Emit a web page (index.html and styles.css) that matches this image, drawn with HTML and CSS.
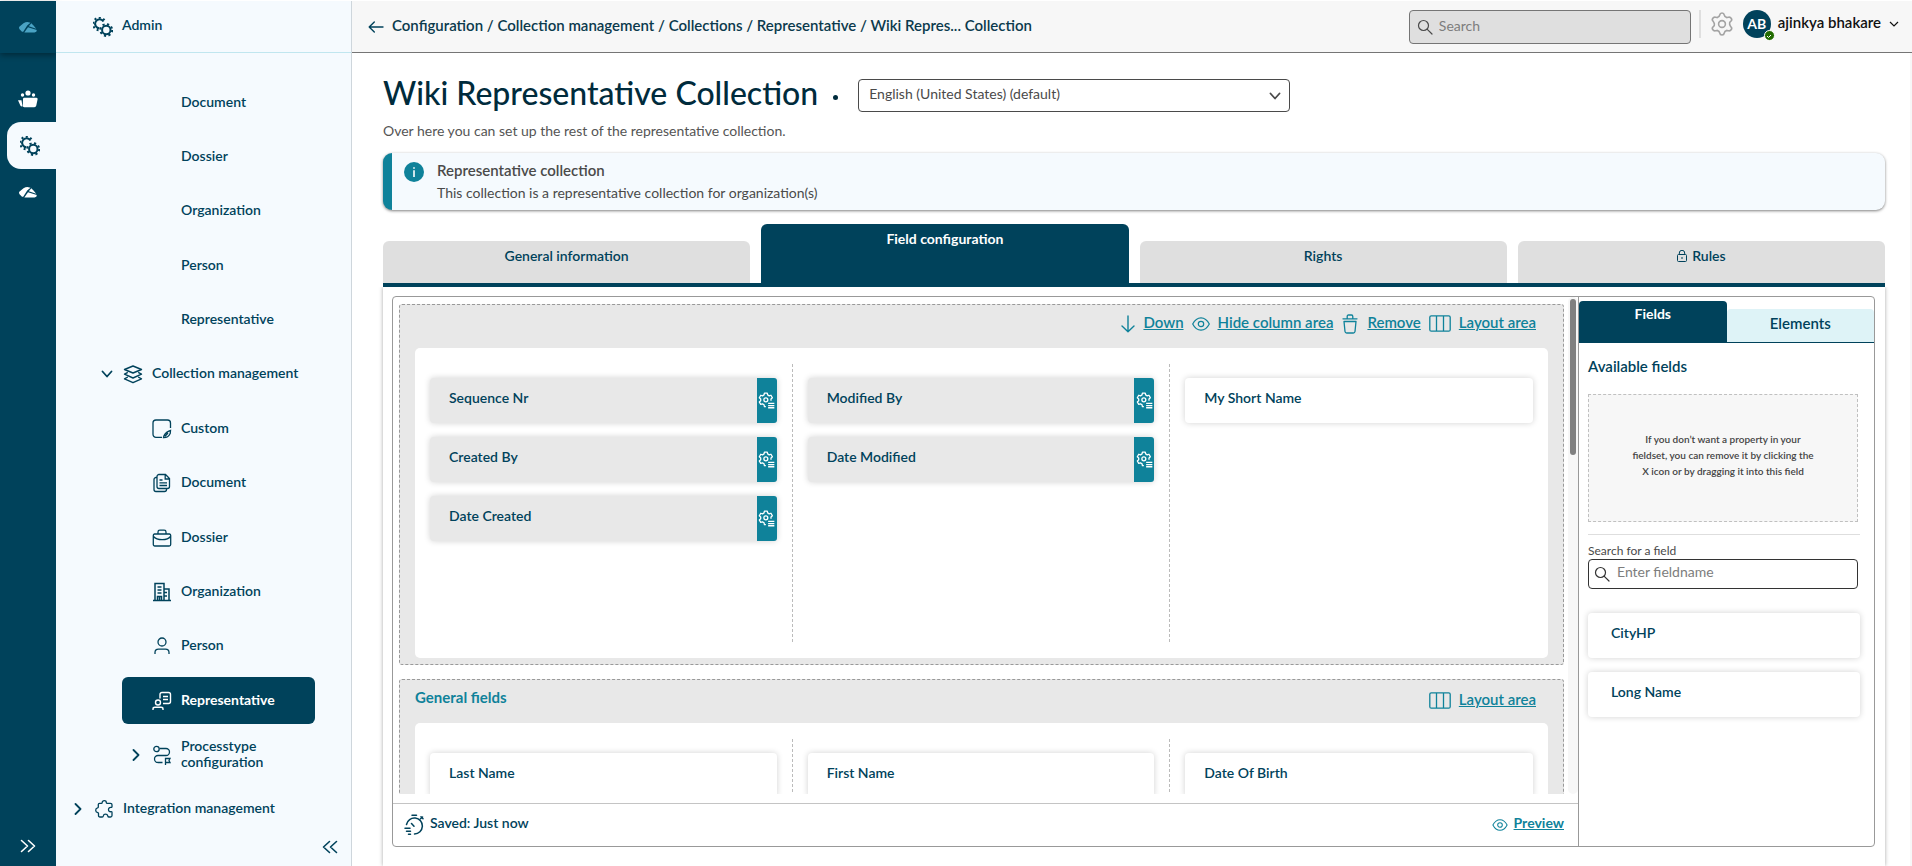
FILE: index.html
```html
<!DOCTYPE html>
<html lang="en">
<head>
<meta charset="utf-8">
<title>Wiki Representative Collection</title>
<link rel="stylesheet" href="styles.css">
</head>
<body>
<svg class="sprite" aria-hidden="true">
  <symbol id="i-logo" viewBox="0 0 18 11"><path fill="currentColor" d="M4.500 1.200Q6.500 0 8.500 0L11.500.8 8.200 3.500 4.200 9.800H3L.3 7 0 5z"/><path fill="currentColor" d="M12.300 1.200 14.500 3.500 17.200 6.800 9.800 4.200z"/><path fill="currentColor" d="M9 5.200 17.800 8l-.5 1.800L15.500 10.600H5.300z"/></symbol>
  <symbol id="i-team" viewBox="0 0 20 18"><circle cx="10" cy="3" r="2.600" fill="currentColor"/><circle cx="4.500" cy="5" r="1.700" fill="currentColor"/><circle cx="15.500" cy="5" r="1.700" fill="currentColor"/><path fill="currentColor" d="M0 10.200h3.500L4.500 16.500Q2.500 17 2 14.800zM6.200 7.800H18.500Q19.900 7.800 19.600 9.300L18.300 15.500Q17.900 17.200 16.300 17.200H6.300Q4.600 17.200 4.800 15.400L5 9.200Q5 7.800 6.200 7.800z"/></symbol>
  <symbol id="i-gears" viewBox="0 0 20 20"><g fill="none" stroke="currentColor"><path stroke-width="2" d="M10.500 4.500A4.500 4.500 0 1 0 6.500 11.300"/><path stroke-width="2" stroke-dasharray="2 2.500" d="M11.500 3.200A6.300 6.300 0 1 0 5.600 13.200"/><circle cx="13.300" cy="13" r="4.200" stroke-width="2"/><circle cx="13.300" cy="13" r="5.900" stroke-width="2" stroke-dasharray="2.200 2.434"/></g></symbol>
  <symbol id="i-layers" viewBox="0 0 20 19"><path fill="none" stroke="currentColor" stroke-width="1.400" stroke-linejoin="round" d="M10 1 18.500 4.500 10 8 1.500 4.500zM4.800 7.300 1.500 9.200 10 13l8.500-3.800-3.300-1.900M4.800 12 1.500 13.900 10 17.700l8.500-3.800L15.200 12"/></symbol>
  <symbol id="i-custom" viewBox="0 0 20 20"><path fill="none" stroke="currentColor" stroke-width="1.300" d="M10 18.300H4A3 3 0 0 1 1 15.300V4A3 3 0 0 1 4 1H15.500A3 3 0 0 1 18.500 4V9"/><path fill="none" stroke="currentColor" stroke-width="1.300" d="M11.500 18.700C12 15 14 13.500 16.800 12.200L18.500 11.500 18.200 14.500C17 17 14.500 18.800 11.500 18.700zM13 17.300 16 14"/></symbol>
  <symbol id="i-doc" viewBox="0 0 20 20"><g fill="none" stroke="currentColor" stroke-width="1.300"><path d="M7 1.500H13.500L17.500 5.500V13.500A2 2 0 0 1 15.500 15.500H7A2 2 0 0 1 5 13.500V3.500A2 2 0 0 1 7 1.500zM13.200 1.800V6H17.500M7.500 7H10.500M7.500 9.800H15M7.500 12.500H15"/><path d="M5 4.500H4A2 2 0 0 0 2 6.500V16.500A2 2 0 0 0 4 18.500H12.500A2 2 0 0 0 14.500 16.500V15.500"/></g></symbol>
  <symbol id="i-case" viewBox="0 0 20 18"><g fill="none" stroke="currentColor" stroke-width="1.300"><path d="M2.500 5H17.500A1.500 1.500 0 0 1 18.700 6.500V15.500A1.500 1.500 0 0 1 17.200 17H2.800A1.500 1.500 0 0 1 1.300 15.500V6.500A1.500 1.500 0 0 1 2.500 5zM1.500 7.500C5 11.500 15 12 18.500 7.500M6 5V3A1.800 1.800 0 0 1 7.800 1.200H12.200A1.800 1.800 0 0 1 14 3V5"/></g></symbol>
  <symbol id="i-building" viewBox="0 0 20 20"><g fill="none" stroke="currentColor" stroke-width="1.500"><path d="M1 18.500H19M3 18.500V1.500H12V18.500M12 7H17V18.500M5.500 5H9.500M5.500 8H9.500M5.500 11H9.500M5.500 18V14.500H9.500V18M7.500 14.500V18M12 10.500H15M12 14H15"/></g></symbol>
  <symbol id="i-person" viewBox="0 0 16 18"><g fill="none" stroke="currentColor" stroke-width="1.300"><circle cx="8" cy="5" r="4"/><path d="M1 17V15.500Q1 12.200 4.500 12.200H11.500Q15 12.200 15 15.500V17"/></g></symbol>
  <symbol id="i-rep" viewBox="0 0 20 20"><g fill="none" stroke="currentColor" stroke-width="1.400"><circle cx="6" cy="11.500" r="2.500"/><path d="M1 19V18Q1 16.300 3 16.300H9Q11 16.300 11 18V19M8 7.500V3.500A2 2 0 0 1 10 1.500H16.500A2 2 0 0 1 18.500 3.500V10.500A2 2 0 0 1 16.500 12.500H11M11 5.500H16M11 8.500H16"/></g></symbol>
  <symbol id="i-route" viewBox="0 0 18 20"><g fill="none" stroke="currentColor" stroke-width="1.300"><circle cx="3.500" cy="4" r="2.700"/><path d="M6.500 3.500H13A3.500 3.500 0 0 1 13 10.500H5A3.500 3.500 0 0 0 5 17.500H9.500M12.500 20V13.500H17L16 15.500 17 17.500H12.500"/></g></symbol>
  <symbol id="i-puzzle" viewBox="0 0 18 18"><path fill="none" stroke="currentColor" stroke-width="1.300" stroke-linejoin="round" d="M4.500 3.300H6.500Q7.300 3.200 7.200 2.500C7.200 1.300 8 .7 9.200.7S11.300 1.300 11.300 2.500Q11.300 3.200 12 3.300H15.500Q17 3.300 17 4.800V6.500Q17 7.500 16 7.400C14.300 7.200 13.500 8.400 13.500 9.600S14.300 11.900 16 11.700Q17 11.600 17 12.500V15.500Q17 17 15.500 17H14Q13 17 12.800 16C12.500 14.700 11.700 14.200 10.500 14.200S8.500 14.700 8.300 16Q8.200 17 7.200 17H5Q3.500 17 3.500 15.500V13.500Q3.500 12.800 2.800 12.600C1.500 12.300.7 11.500.7 10.200S1.400 8 2.600 7.800Q3.300 7.700 3.300 7V4.500Q3.300 3.300 4.500 3.300z"/></symbol>
  <symbol id="i-down" viewBox="0 0 12 12"><path fill="none" stroke="currentColor" stroke-width="1.800" stroke-linecap="round" stroke-linejoin="round" d="M1.500 3.500 6 8.500 10.500 3.500"/></symbol>
  <symbol id="i-right" viewBox="0 0 12 12"><path fill="none" stroke="currentColor" stroke-width="1.800" stroke-linecap="round" stroke-linejoin="round" d="M3.500 1 8.500 6 3.500 11"/></symbol>
  <symbol id="i-dright" viewBox="0 0 16 14"><path fill="none" stroke="currentColor" stroke-width="1.600" stroke-linecap="round" stroke-linejoin="round" d="M1.500 1.500 7.500 7 1.500 12.500M8.500 1.500 14.500 7 8.500 12.500"/></symbol>
  <symbol id="i-dleft" viewBox="0 0 16 14"><path fill="none" stroke="currentColor" stroke-width="1.600" stroke-linecap="round" stroke-linejoin="round" d="M7.500 1.500 1.500 7 7.500 12.500M14.500 1.500 8.500 7 14.500 12.500"/></symbol>
  <symbol id="i-back" viewBox="0 0 16 12"><path fill="none" stroke="currentColor" stroke-width="1.400" stroke-linecap="round" stroke-linejoin="round" d="M15 6H1.200M6.300 1 1.200 6 6.300 11"/></symbol>
  <symbol id="i-search" viewBox="0 0 16 16"><g fill="none" stroke="currentColor" stroke-width="1.200" stroke-linecap="round"><circle cx="6.500" cy="6.500" r="5"/><path d="M10.300 10.300 15 15"/></g></symbol>
  <symbol id="i-cog" viewBox="0 0 24 24"><g fill="none" stroke="currentColor" stroke-width="1.600" stroke-linejoin="round"><path d="M9.800 2.800Q10 1 12 1T14.200 2.800Q14.500 5 17 5.600L18.500 5.200Q20.300 4.800 21.300 6.500T20.900 9.200Q19.200 10.300 19.600 12T20.900 14.800Q22.300 15.800 21.300 17.500T18.500 18.800L17 18.400Q14.500 19 14.200 21.200Q14 23 12 23T9.800 21.200Q9.500 19 7 18.400L5.500 18.800Q3.700 19.200 2.700 17.500T3.100 14.800Q4.800 13.700 4.400 12T3.100 9.200Q1.700 8.200 2.700 6.500T5.500 5.200L7 5.600Q9.500 5 9.800 2.800z"/><circle cx="12" cy="12" r="3.400"/></g></symbol>
  <symbol id="i-coglist" viewBox="0 0 26 26"><g fill="none" stroke="currentColor" stroke-width="2" stroke-linejoin="round"><path d="M19.880 13.390V10.610L21.990 8.760 19.800 4.970 17.140 5.870 14.740 4.480 14.180 1.730H9.820L9.260 4.480 6.860 5.870 4.200 4.970 2.010 8.760 4.120 10.610V13.390L2.010 15.240 4.200 19.030 6.860 18.130 9.260 19.520 9.820 22.270H12"/><circle cx="12" cy="12" r="3"/><path d="M15.500 17.500H25M15.500 20.800H25M15.500 24.100H25"/></g></symbol>
  <symbol id="i-info" viewBox="0 0 20 20"><circle cx="10" cy="10" r="10" fill="currentColor"/><path fill="#fff" d="M9.200 5.200H10.800V6.800H9.200zM9.200 8.300H10.800V15H9.200z"/></symbol>
  <symbol id="i-lock" viewBox="0 0 10 12"><g fill="none" stroke="currentColor" stroke-width="1"><rect x=".5" y="4.500" width="9" height="7" rx="1"/><path d="M2.300 4.500V3A2.700 2.700 0 0 1 7.700 3V4.500M5 7V9"/></g></symbol>
  <symbol id="i-arrow" viewBox="0 0 14 18"><path fill="none" stroke="currentColor" stroke-width="1.400" stroke-linecap="round" stroke-linejoin="round" d="M7 1V16.500M1 11 7 16.700 13 11"/></symbol>
  <symbol id="i-eye" viewBox="0 0 18 14"><g fill="none" stroke="currentColor" stroke-width="1.200"><path d="M.7 7C2.500 3.500 5.500.8 9 .8S15.500 3.500 17.300 7C15.500 10.500 12.500 13.200 9 13.200S2.500 10.500.7 7z"/><circle cx="9" cy="7" r="2.700"/></g></symbol>
  <symbol id="i-trash" viewBox="0 0 16 20"><path fill="none" stroke="currentColor" stroke-width="1.300" stroke-linejoin="round" stroke-linecap="round" d="M1 4.800H15M5.200 4.500V2.500Q5.200 1 6.500 1H9.500Q10.800 1 10.800 2.500V4.500M2 7.500 3 17.500Q3.200 19 4.700 19H11.300Q12.800 19 13 17.500L14 7.500z"/></symbol>
  <symbol id="i-cols" viewBox="0 0 22 17"><g fill="none" stroke="currentColor" stroke-width="1.300"><rect x=".8" y=".8" width="20.400" height="15.400" rx="1.500"/><path d="M7.500 1V16M14.500 1V16"/></g></symbol>
  <symbol id="i-timer" viewBox="0 0 20 22"><path fill="none" stroke="currentColor" stroke-width="1.500" stroke-linecap="round" d="M2.500 10.500A8 8 0 1 1 10.500 20M8 1.200H12.500M16.500 4.800 18.500 3M17 2.800 19 4.800M7.500 9.500 10 12.300M1 14.300H6M2.500 17.300H6.500M4.500 20.300H6.500"/></symbol>
</svg>

<div class="app">
  <aside class="rail">
    <a class="rail-logo" href="#" aria-label="Home"><svg width="18" height="11"><use href="#i-logo"/></svg></a>
    <nav class="rail-nav" aria-label="Modules">
      <a href="#" aria-label="Workspace"><svg width="20" height="18"><use href="#i-team"/></svg></a>
      <a href="#" class="current" aria-label="Admin"><svg width="20" height="20"><use href="#i-gears"/></svg></a>
      <a href="#" aria-label="Platform"><svg width="18" height="11"><use href="#i-logo"/></svg></a>
    </nav>
    <button class="rail-toggle" aria-label="Expand"><svg width="16" height="14"><use href="#i-dright"/></svg></button>
  </aside>

  <aside class="side">
    <div class="side-head"><svg width="20" height="20"><use href="#i-gears"/></svg><span>Admin</span></div>
    <nav class="tree" aria-label="Admin">
      <a href="#" class="node l3"><span>Document</span></a>
      <a href="#" class="node l3"><span>Dossier</span></a>
      <a href="#" class="node l3"><span>Organization</span></a>
      <a href="#" class="node l3"><span>Person</span></a>
      <a href="#" class="node l3"><span>Representative</span></a>
      <a href="#" class="node l2"><svg class="chev" width="12" height="12"><use href="#i-down"/></svg><svg class="ico" width="20" height="19"><use href="#i-layers"/></svg><span>Collection management</span></a>
      <a href="#" class="node l3"><svg class="ico" width="20" height="20"><use href="#i-custom"/></svg><span>Custom</span></a>
      <a href="#" class="node l3"><svg class="ico" width="20" height="20"><use href="#i-doc"/></svg><span>Document</span></a>
      <a href="#" class="node l3"><svg class="ico" width="20" height="18"><use href="#i-case"/></svg><span>Dossier</span></a>
      <a href="#" class="node l3"><svg class="ico" width="20" height="20"><use href="#i-building"/></svg><span>Organization</span></a>
      <a href="#" class="node l3"><svg class="ico" width="20" height="18"><use href="#i-person"/></svg><span>Person</span></a>
      <a href="#" class="node l3 selected" aria-current="page"><svg class="ico" width="20" height="20"><use href="#i-rep"/></svg><span>Representative</span></a>
      <a href="#" class="node l3"><svg class="chev" width="12" height="12"><use href="#i-right"/></svg><svg class="ico" width="20" height="20"><use href="#i-route"/></svg><span>Processtype configuration</span></a>
      <a href="#" class="node l1"><svg class="chev" width="12" height="12"><use href="#i-right"/></svg><svg class="ico" width="20" height="18"><use href="#i-puzzle"/></svg><span>Integration management</span></a>
    </nav>
    <button class="side-toggle" aria-label="Collapse"><svg width="16" height="14"><use href="#i-dleft"/></svg></button>
  </aside>

  <div class="main">
    <header class="top">
      <button class="back" aria-label="Back"><svg width="16" height="12"><use href="#i-back"/></svg></button>
      <nav class="crumbs" aria-label="Breadcrumb">Configuration / Collection management / Collections / Representative / Wiki Repres... Collection</nav>
      <label class="search"><svg width="16" height="16"><use href="#i-search"/></svg><input type="search" placeholder="Search" aria-label="Search"></label>
      <div class="account">
        <button class="cog" aria-label="Settings"><svg width="24" height="24"><use href="#i-cog"/></svg></button>
        <button class="user"><span class="avatar">AB<span class="badge"><svg viewBox="0 0 8 8" width="8" height="8"><path d="M2 4 3.500 5.500 6 3" fill="none" stroke="#fff"/></svg></span></span><span class="user-name">ajinkya bhakare</span><svg width="12" height="12" viewBox="0 0 12 12"><path d="M2 4 6 8 10 4" fill="none" stroke="currentColor" stroke-width="1.200"/></svg></button>
      </div>
    </header>

    <main class="page">
      <div class="title-row">
        <h1>Wiki Representative Collection</h1>
        <i class="dot"></i>
        <div class="select">
          <select aria-label="Language"><option>English (United States) (default)</option></select>
          <svg width="12" height="12"><use href="#i-down"/></svg>
        </div>
      </div>
      <p class="intro">Over here you can set up the rest of the representative collection.</p>
      <section class="notice">
        <svg width="20" height="20"><use href="#i-info"/></svg>
        <div><h2>Representative collection</h2><p>This collection is a representative collection for organization(s)</p></div>
      </section>
      <div class="tabs" role="tablist">
        <button role="tab">General information</button>
        <button role="tab" class="active" aria-selected="true">Field configuration</button>
        <button role="tab">Rights</button>
        <button role="tab"><svg width="10" height="12"><use href="#i-lock"/></svg>Rules</button>
      </div>
      <div class="panel">
        <div class="editor">
          <section class="canvas">
            <div class="viewport">
              <div class="areas">
                <section class="area">
                  <header class="area-head">
                    <div class="actions">
                      <a href="#"><svg width="14" height="18"><use href="#i-arrow"/></svg><span>Down</span></a>
                      <a href="#"><svg width="18" height="14"><use href="#i-eye"/></svg><span>Hide column area</span></a>
                      <a href="#"><svg width="18" height="20"><use href="#i-trash"/></svg><span>Remove</span></a>
                      <a href="#"><svg width="22" height="17"><use href="#i-cols"/></svg><span>Layout area</span></a>
                    </div>
                  </header>
                  <div class="columns">
                    <div class="col">
                      <div class="field locked"><span>Sequence Nr</span><button aria-label="Sequence Nr settings"><svg width="17" height="17"><use href="#i-coglist"/></svg></button></div>
                      <div class="field locked"><span>Created By</span><button aria-label="Created By settings"><svg width="17" height="17"><use href="#i-coglist"/></svg></button></div>
                      <div class="field locked"><span>Date Created</span><button aria-label="Date Created settings"><svg width="17" height="17"><use href="#i-coglist"/></svg></button></div>
                    </div>
                    <div class="col">
                      <div class="field locked"><span>Modified By</span><button aria-label="Modified By settings"><svg width="17" height="17"><use href="#i-coglist"/></svg></button></div>
                      <div class="field locked"><span>Date Modified</span><button aria-label="Date Modified settings"><svg width="17" height="17"><use href="#i-coglist"/></svg></button></div>
                    </div>
                    <div class="col">
                      <div class="field"><span>My Short Name</span></div>
                    </div>
                  </div>
                </section>
                <section class="area">
                  <header class="area-head titled">
                    <h3>General fields</h3>
                    <div class="actions"><a href="#"><svg width="22" height="17"><use href="#i-cols"/></svg><span>Layout area</span></a></div>
                  </header>
                  <div class="columns">
                    <div class="col"><div class="field"><span>Last Name</span></div></div>
                    <div class="col"><div class="field"><span>First Name</span></div></div>
                    <div class="col"><div class="field"><span>Date Of Birth</span></div></div>
                  </div>
                </section>
              </div>
              <div class="track" aria-hidden="true"><div class="thumb"></div></div>
            </div>
            <footer class="canvas-foot">
              <span class="saved"><svg width="20" height="22"><use href="#i-timer"/></svg><span>Saved: Just now</span></span>
              <a href="#" class="preview"><svg width="16" height="12"><use href="#i-eye"/></svg><span>Preview</span></a>
            </footer>
          </section>
          <aside class="library">
            <div class="lib-tabs" role="tablist">
              <button role="tab" class="active" aria-selected="true">Fields</button>
              <button role="tab">Elements</button>
            </div>
            <div class="lib-body">
              <h3>Available fields</h3>
              <div class="drop"><p>If you don’t want a property in your fieldset, you can remove it by clicking the X icon or by dragging it into this field</p></div>
              <hr>
              <label for="fieldname">Search for a field</label>
              <div class="find"><svg width="16" height="16"><use href="#i-search"/></svg><input id="fieldname" type="text" placeholder="Enter fieldname"></div>
              <div class="lib-list">
                <div class="field"><span>CityHP</span></div>
                <div class="field"><span>Long Name</span></div>
              </div>
            </div>
          </aside>
        </div>
      </div>
    </main>
  </div>
</div>
</body>
</html>
```
FILE: styles.css
```css
:root {
  --navy: #00425b;
  --teal: #0f829a;
  --ice: #f5fafe;
  --grey: #e8e8e8;
  --line: #999;
  --text: #4a4a4a;
}
* { box-sizing: border-box; margin: 0; }
body {
  font: 600 14px/16px Lato, "Liberation Sans", sans-serif;
  color: var(--navy);
  background: #fff;
}
a { color: inherit; text-decoration: none; }
button, input, select { font: inherit; color: inherit; background: none; border: 0; padding: 0; }
svg { flex: none; display: block; }
.sprite { position: absolute; width: 0; height: 0; }

.app { display: flex; height: 100vh; padding-top: 1px; overflow: hidden; }

/* Icon rail */
.rail { width: 56px; flex: none; display: flex; flex-direction: column; background: var(--navy); color: #fff; }
.rail-logo { height: 52px; display: grid; place-items: center; color: #4aa3c4; box-shadow: 0 2px 6px rgba(0, 0, 0, .4); }
.rail-nav { flex: 1; padding-top: 22px; }
.rail-nav a { height: 47px; margin-left: 7px; padding-right: 7px; display: grid; place-items: center; }
.rail-nav .current { background: var(--ice); color: var(--navy); border-radius: 14px 0 0 14px; padding-right: 3px; }
.rail-toggle { height: 40px; display: grid; place-items: center; }

/* Navigation tree */
.side { width: 296px; flex: none; display: flex; flex-direction: column; background: var(--ice); border-right: 1px solid #ced6dc; }
.side-head { height: 52px; flex: none; display: flex; align-items: center; gap: 9px; padding-left: 37px; border-bottom: 1px solid #c0e6ef; }
.side-head span { padding-bottom: 4px; }
.tree { flex: 1; display: flex; flex-direction: column; justify-content: space-between; padding-top: 26px; }
.node { height: 47px; display: flex; align-items: center; margin-right: 36px; border-radius: 6px; }
.node span { padding-bottom: 2px; }
.node .ico { margin-right: 9px; }
.node .chev { margin-right: 10px; }
.l1 { margin-left: 16px; }
.l2 { margin-left: 45px; }
.l3 { margin-left: 66px; padding-left: 59px; }
.l3:has(.ico) { padding-left: 30px; }
.l3:has(.chev) { padding-left: 8px; }
.l3 span { max-width: 110px; }
.selected { background: var(--navy); color: #fff; font-weight: 700; }
.side-toggle { align-self: flex-end; height: 38px; margin: -5px 13px 0 0; }

/* Top bar */
.main { flex: 1; min-width: 0; display: flex; flex-direction: column; }
.top { height: 52px; flex: none; display: flex; align-items: center; padding: 0 12px 0 16px; background: #f7f7f7; border-bottom: 1px solid #757575; }
.back { margin-right: 8px; }
.crumbs { flex: 1; color: #0b3a4d; font-size: 15px; padding-bottom: 4px; }
.search { width: 282px; height: 34px; display: flex; align-items: center; gap: 6px; padding-left: 7px; background: #dfdfdf; border: 1px solid #757575; border-radius: 4px; color: #4a4a4a; }
.search input { flex: 1; min-width: 0; padding-bottom: 2px; outline: 0; font-weight: 400; }
::placeholder { color: #7d7d7d; opacity: 1; }
.account { display: flex; align-items: center; gap: 9px; height: 28px; margin: -5px 0 0 8px; padding-left: 9px; border-left: 2px solid #dfdfdf; }
.cog { color: #a3a3a3; }
.user { display: flex; align-items: center; gap: 7px; color: #111; }
.user-name { font-size: 15px; padding-bottom: 4px; }
.avatar { position: relative; width: 28px; height: 28px; border-radius: 50%; display: grid; place-items: center; background: var(--navy); color: #fff; font-weight: 700; }
.badge { position: absolute; right: -4px; bottom: -3px; width: 11px; height: 11px; display: grid; place-items: center; background: #216b00; border: 1px solid #fff; border-radius: 50%; }

/* Page */
.page { flex: 1; min-height: 0; display: flex; flex-direction: column; padding: 23px 25px 0 31px; border-right: 2px solid #f7f7f7; }
.title-row { display: flex; align-items: center; height: 38px; }
h1 { padding-bottom: 4px; font-size: 32px; line-height: 38px; font-weight: 500; color: #002b3c; }
.dot { width: 5px; height: 5px; margin: 4px 20px 0 15px; border-radius: 50%; background: #002b3c; }
.select { position: relative; width: 432px; height: 33px; color: var(--text); }
.select select { appearance: none; width: 100%; height: 100%; padding: 0 30px 2px 10px; border: 1px solid var(--text); border-radius: 4px; font-weight: 400; }
.select svg { position: absolute; right: 9px; top: 11px; }
.intro { margin-top: 8px; line-height: 18px; font-weight: 400; color: #555; }
.notice { display: flex; gap: 13px; height: 57px; margin-top: 13px; padding: 9px 12px; border-left: 9px solid var(--teal); border-radius: 9px; background: var(--ice); color: var(--teal); box-shadow: 0 1px 3px rgba(0, 0, 0, .5); }
.notice h2 { font-size: 15px; line-height: 16px; font-weight: 600; color: var(--text); }
.notice p { margin-top: 6px; line-height: 18px; font-weight: 400; color: var(--text); }

.tabs { display: grid; grid-template-columns: repeat(4, 1fr); column-gap: 11px; align-items: end; margin-top: 14px; border-bottom: 4px solid var(--navy); }
.tabs button { height: 42px; padding-bottom: 12px; display: flex; align-items: center; justify-content: center; gap: 5px; background: #dfdfdf; border-radius: 6px 6px 0 0; }
.tabs .active { height: 59px; padding-bottom: 30px; background: var(--navy); color: #fff; font-weight: 700; }

.panel { flex: 1; min-height: 0; padding: 9px 10px 19px 9px; box-shadow: 0 0 4px rgba(0, 0, 0, .35); clip-path: inset(0 -6px 0 -6px); }
.editor { display: flex; height: 100%; border: 1px solid var(--line); border-radius: 4px; }
.canvas { flex: 1; min-width: 0; display: flex; flex-direction: column; }
.viewport { flex: 1; min-height: 0; display: flex; margin-bottom: 9px; }
.areas { flex: 1; overflow: hidden; padding: 7px 4px 0 6px; }
.track { width: 10px; padding: 2px; background: #f7f7f7; border-radius: 5px; }
.thumb { height: 156px; border-radius: 3px; background: #808080; }
.area { margin-bottom: 14px; padding: 0 15px 6px; background: var(--grey); border: 1px dashed var(--line); border-radius: 3px; }
.area-head { display: flex; align-items: center; height: 43px; padding: 0 12px 6px 0; }
.area-head h3 { font-size: 15px; color: var(--teal); padding-bottom: 8px; }
.titled { padding-bottom: 2px; }
.actions { display: flex; gap: 8px; margin-left: auto; color: var(--teal); }
.actions a { display: flex; align-items: center; gap: 8px; height: 20px; font-size: 15px; text-decoration: underline; }
.actions span { padding-bottom: 4px; }
.columns { display: grid; grid-template-columns: repeat(3, 1fr); min-height: 310px; padding: 16px 0; background: #fff; border-radius: 5px; }
.col { padding: 14px 15px 0; border-right: 1px dashed #bbb; }
.col:last-child { border-right: 0; }
.field { display: flex; height: 45px; margin-bottom: 14px; padding-left: 19px; background: #fff; border-radius: 4px; box-shadow: 0 0 6px rgba(0, 0, 0, .18); }
.field span { flex: 1; padding-top: 12px; }
.field button { width: 20px; display: grid; place-items: center; background: var(--teal); color: #fff; border-radius: 0 3px 3px 0; }
.locked { background: var(--grey); }
.canvas-foot { display: flex; align-items: center; justify-content: space-between; height: 43px; padding: 0 14px 0 11px; border-top: 1px solid #c4c4c4; }
.saved, .preview { display: flex; align-items: center; gap: 6px; }
.canvas-foot span span, .preview span { padding-bottom: 4px; }
.preview { color: var(--teal); font-weight: 700; text-decoration: underline; }

/* Field library */
.library { width: 296px; flex: none; border-left: 1px solid var(--line); }
.lib-tabs { display: grid; grid-template-columns: 1fr 1fr; align-items: end; height: 46px; border-bottom: 1px solid var(--navy); }
.lib-tabs button { height: 33px; padding-bottom: 6px; background: #def3f7; border-radius: 4px 4px 0 0; font-size: 15px; }
.lib-tabs .active { height: 41px; padding-bottom: 16px; background: var(--navy); color: #fff; font-size: 14px; font-weight: 700; }
.lib-body { padding: 14px 14px 0 9px; }
.lib-body h3 { font-size: 15px; line-height: 18px; font-weight: 600; }
.drop { height: 128px; margin: 19px 2px 12px 0; display: grid; place-items: center; background: #f7f7f7; border: 1px dashed #c0c0c0; }
.drop p { width: 190px; padding-bottom: 6px; font-size: 10px; line-height: 16px; text-align: center; color: #444; }
hr { border: 0; border-top: 1px solid #dedede; }
.lib-body label { display: block; margin-top: 8px; font-size: 12px; font-weight: 400; color: var(--text); }
.find { display: flex; align-items: center; gap: 7px; height: 30px; margin-right: 2px; padding-left: 5px; border: 1px solid #333; border-radius: 4px; color: #333; }
.find input { flex: 1; min-width: 0; padding-bottom: 4px; outline: 0; font-weight: 400; }
.lib-list { margin-top: 24px; }
.lib-list .field { padding-left: 23px; }
```
